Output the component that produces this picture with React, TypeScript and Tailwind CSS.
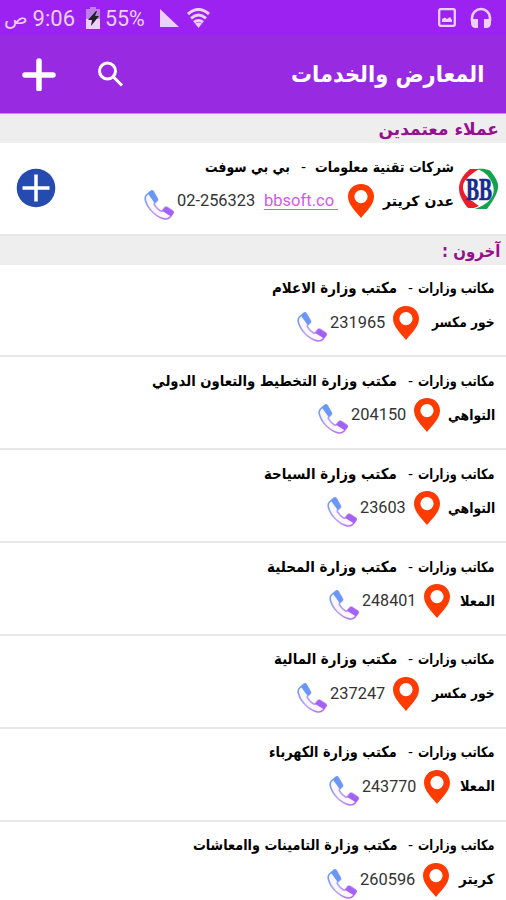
import { useLayoutEffect, useRef, useState } from "react";

type FitProps = { text: string; width: number; className?: string; ltr?: boolean };

// One line of text squeezed or stretched to a given column width.
function Fit({ text, width, className = "", ltr = false }: FitProps) {
  const ref = useRef<HTMLSpanElement>(null);
  const [scale, setScale] = useState(1);
  useLayoutEffect(() => {
    const natural = ref.current?.offsetWidth ?? width;
    if (natural > 0) setScale(width / natural);
  }, [text, width]);
  return (
    <span dir="rtl" className={"flex shrink-0 justify-start " + className} style={{ width }}>
      <span
        ref={ref}
        dir={ltr ? "ltr" : "rtl"}
        className="shrink-0 origin-right whitespace-pre"
        style={{ transform: `scaleX(${scale})` }}
      >
        {text}
      </span>
    </span>
  );
}

const arabic = "font-['DejaVu_Sans',sans-serif] font-bold";

function Pin() {
  return (
    <svg className="h-[34px] w-[26px] shrink-0" viewBox="0 0 26 34">
      <path
        fill="#ff3b00"
        fillRule="evenodd"
        d="M13 0C5.6 0 0 5.500 0 12.600 0 20.500 7.200 27 13 34c5.800-7 13-13.500 13-21.400C26 5.500 20.400 0 13 0Zm0 6a6.600 6.600 0 1 1 0 13.200A6.600 6.600 0 0 1 13 6Z"
      />
    </svg>
  );
}

function Phone() {
  return (
    <svg className="h-[30px] w-[30px] shrink-0" viewBox="0 0 30 30">
      <defs>
        <linearGradient id="call" x1="0" y1="0" x2="1" y2="1">
          <stop offset="0" stopColor="#5b9bf8" />
          <stop offset=".5" stopColor="#b9a2f6" />
          <stop offset="1" stopColor="#b263f6" />
        </linearGradient>
      </defs>
      <path
        d="M6.800 1.300 2.500 5C1.200 6.300.900 8.200 1.400 10.300 3.600 19 12.500 27.300 20.300 28.900c2.300.4 4.200-.1 5.600-1.600l3-4c.6-.9.4-1.700-.5-2.300l-5.200-3.500c-.9-.6-1.700-.5-2.400.3l-2.300 2.700c-.6.700-1.400.8-2.200.3-2.300-1.500-4.300-3.500-5.700-5.800-.5-.8-.4-1.600.3-2.200l2-1.800c.8-.7.900-1.500.4-2.400L9.300 1.700c-.6-1-1.500-1.200-2.500-.4Z"
        fill="#fcf6ff"
        stroke="url(#call)"
        strokeWidth="1.600"
      />
      <path d="M4 3.700 6.800 1.300c1-.8 1.900-.6 2.500.4l4 6.900c.5.900.4 1.700-.4 2.400l-2.300 2Z" fill="#6797f7" />
      <path d="m18.200 20.900 2.600-3.100c.7-.8 1.500-.9 2.400-.3l5.200 3.500c.9.600 1.100 1.400.5 2.300l-2.200 3Z" fill="#a361f5" />
    </svg>
  );
}

function Logo() {
  return (
    <svg direction="ltr" className="h-[42px] w-[40px] shrink-0 overflow-visible" viewBox="0 0 40 42">
      <path d="M20 1h-9C5 6 0 13 0 20c0 7 3 12 8 19h10l-3-4C8 30 4 25 4 19 4 13 9 8 20 1Z" fill="#e91f2d" />
      <path d="M18 1c5-.500 9 0 13 1.500 5 6 9 12 8 17.500-1 7-6 14-11 21H16c8-3 14-7 17-12 3-6 2-12-2-18-3-5-7-8-13-10Z" fill="#12a34c" />
      <path d="m4 32 9 1 7 5-5 2H9Z" fill="#e91f2d" />
      <text
        x="7"
        y="31.500"
        textAnchor="start"
        textLength="26"
        lengthAdjust="spacingAndGlyphs"
        className="font-['Liberation_Serif',serif] text-[31px] font-bold"
        fill="#172c8f"
        stroke="#172c8f"
        strokeWidth=".7"
      >
        BB
      </text>
    </svg>
  );
}

type Office = {
  name: string;
  nameWidth: number;
  area: string;
  areaWidth: number;
  areaBox: string;
  phone: string;
  phoneWidth: number;
};

const offices: Office[] = [
  { name: "مكتب وزارة الاعلام", nameWidth: 125, area: "خور مكسر", areaWidth: 63, areaBox: "w-[76px]", phone: "231965", phoneWidth: 55 },
  { name: "مكتب وزارة التخطيط والتعاون الدولي", nameWidth: 245, area: "التواهي", areaWidth: 47, areaBox: "w-[55px]", phone: "204150", phoneWidth: 55 },
  { name: "مكتب وزارة السياحة", nameWidth: 133, area: "التواهي", areaWidth: 47, areaBox: "w-[55px]", phone: "23603", phoneWidth: 46 },
  { name: "مكتب وزارة المحلية", nameWidth: 130, area: "المعلا", areaWidth: 35, areaBox: "w-[45px]", phone: "248401", phoneWidth: 54 },
  { name: "مكتب وزارة المالية", nameWidth: 123, area: "خور مكسر", areaWidth: 63, areaBox: "w-[76px]", phone: "237247", phoneWidth: 55 },
  { name: "مكتب وزارة الكهرباء", nameWidth: 128, area: "المعلا", areaWidth: 35, areaBox: "w-[45px]", phone: "243770", phoneWidth: 54 },
  { name: "مكتب وزارة التامينات واامعاشات", nameWidth: 205, area: "كريتر", areaWidth: 36, areaBox: "w-[46px]", phone: "260596", phoneWidth: 55 },
];

function OfficeRow({ office }: { office: Office }) {
  return (
    <div className="flex h-[92.85px] shrink-0 flex-col border-b-2 border-[#e7e7e7] pr-[11px] pt-[11.5px] text-black">
      <div className={"flex h-[24px] items-center text-[14px] leading-[24px] " + arabic}>
        <Fit text="مكاتب وزارات" width={77} />
        <span className="w-[21px] pr-[5px] font-normal">-</span>
        <Fit text={office.name} width={office.nameWidth} className="text-[15px]" />
      </div>
      <div className="mt-[5.5px] flex h-[36px] items-start">
        <div className={"flex h-[34px] shrink-0 items-center text-[14px] " + arabic + " " + office.areaBox}>
          <Fit text={office.area} width={office.areaWidth} />
        </div>
        <Pin />
        <Fit text={office.phone} width={office.phoneWidth} ltr className="mr-[8px] mt-[3px] font-['Roboto',sans-serif] text-[17px] leading-[26px] text-[#333]" />
        <div className="mr-[3px] mt-[6px] shrink-0">
          <Phone />
        </div>
      </div>
    </div>
  );
}

export default function App() {
  return (
    <div dir="rtl" className="flex h-[900px] w-[506px] flex-col overflow-hidden bg-white">
      <div dir="ltr" className="flex h-[35px] shrink-0 items-center bg-[#9b22f0] font-['Roboto',sans-serif] text-[22px] text-[#ecd0ff]">
        <Fit text="ص" width={24} className="ml-[4px] font-['DejaVu_Sans',sans-serif] text-[18px]" />
        <Fit text="9:06" width={42} ltr className="ml-[5px] mt-[2px]" />
        <svg className="ml-[10px] h-[22px] w-[16px]" viewBox="0 0 16 22">
          <path d="M5 0h6v2h4v20H1V2h4Z" fill="#ecd0ff" />
          <path d="M5 0h6v2h4v10H1V2h4Z" fill="#bd80e9" />
          <path d="m11 4-8 9h4l-1 6 8-10h-4l2-5Z" fill="#202029" />
        </svg>
        <Fit text="55%" width={40} ltr className="ml-[4px] mt-[2px]" />
        <svg className="ml-[15px] h-[18px] w-[19px]" viewBox="0 0 19 18">
          <path d="M0 0v18h19Z" fill="#ecd0ff" />
        </svg>
        <svg className="ml-[8px] h-[20px] w-[23px]" viewBox="0 0 23 20" fill="none" stroke="#ecd0ff" strokeWidth="3">
          <path d="M1 6q10.500-9 21 0M4 10.300q7.500-6.500 15 0M7 14.300q4.500-3.500 9 0" />
          <path d="M11.500 20 8 15.500q3.500-2 7 0Z" fill="#ecd0ff" stroke="none" />
        </svg>
        <svg className="ml-auto h-[19px] w-[18px]" viewBox="0 0 18 19" fill="none" stroke="#ecd0ff" strokeWidth="2.300">
          <rect x="1.200" y="1.200" width="15.600" height="16.600" rx="1.500" />
          <path d="M4 14v-3l3-1.500 2 1.500 3-2 2 3v2Z" fill="#ecd0ff" stroke="none" />
        </svg>
        <svg className="ml-[14px] mr-[14px] h-[22px] w-[22px]" viewBox="0 0 22 22">
          <path d="M2 14v-3a9 9 0 0 1 18 0v3" fill="none" stroke="#ecd0ff" strokeWidth="2.600" />
          <path d="M1 12h7v9H4.500Q1 20 1 16ZM14 12h7v4q0 4-3.500 5H14Z" fill="#ecd0ff" />
        </svg>
      </div>

      <header className="flex h-[79px] shrink-0 items-center border-b border-[#c58cf0] bg-[#982be1] pr-[22px] text-white">
        <Fit text="المعارض والخدمات" width={193} className={"text-[23px] leading-[40px] " + arabic} />
        <svg className="ml-[41px] mr-auto h-[27px] w-[27px]" viewBox="0 0 27 27" fill="none" stroke="white" strokeWidth="3">
          <circle cx="10.500" cy="10" r="8" />
          <path d="m16 15.500 9 9" />
        </svg>
        <svg className="ml-[22px] h-[34px] w-[34px]" viewBox="0 0 34 34" stroke="white" strokeWidth="5.500" strokeLinecap="round">
          <path d="M17 4v28M3 18h28" />
        </svg>
      </header>

      <div className={"flex h-[29px] shrink-0 items-center border-t-2 border-[#f2e8fa] bg-[#eee] pr-[7px] text-[17px] text-[#960f8f] " + arabic}>
        <Fit text="عملاء معتمدين" width={121} />
      </div>

      <div className="flex h-[93px] shrink-0 border-b-2 border-[#e7e7e7] pr-[7px] text-black">
        <div className="mt-[25px]"><Logo /></div>
        <div className="mr-[5px] flex flex-col pt-[12px]">
          <div className={"flex h-[24px] items-center text-[14px] " + arabic}>
            <Fit text="شركات تقنية معلومات" width={139} />
            <span className="w-[25px] pr-[9px] font-normal">-</span>
            <Fit text="بي بي سوفت" width={85} className="text-[15px]" />
          </div>
          <div className="mt-[5px] flex h-[36px] items-start">
            <div className={"flex h-[34px] w-[80px] items-center text-[14px] " + arabic}>
              <Fit text="عدن كريتر" width={71} />
            </div>
            <Pin />
            <div className="mr-[10px] mt-[3px] flex h-[23px] w-[74px] shrink-0 border-b border-[#d35be8] pr-[4px] font-['Roboto',sans-serif] text-[17px] leading-[26px] text-[#d35be8]">
              <Fit text="bbsoft.co" width={70} ltr />
            </div>
            <Fit text="02-256323" width={78} ltr className="mr-[9px] mt-[3px] font-['Roboto',sans-serif] text-[17px] leading-[26px] text-[#333]" />
            <div className="mr-[3px] mt-[6px] shrink-0">
              <Phone />
            </div>
          </div>
        </div>
        <svg className="ml-[16px] mr-auto mt-[25px] h-[40px] w-[40px] shrink-0" viewBox="0 0 40 40">
          <circle cx="20" cy="20" r="19.300" fill="#264bb0" />
          <path d="M20 6.500v27M6.500 20h27" stroke="white" strokeWidth="3.500" />
        </svg>
      </div>

      <div className={"flex h-[28.500px] shrink-0 items-center bg-[#eee] pr-[6px] pt-[2px] text-[17px] text-[#960f8f] " + arabic}>
        <Fit text="آخرون :" width={58} />
      </div>

      <main className="flex flex-col">
        {offices.map((office) => (
          <OfficeRow key={office.phone} office={office} />
        ))}
      </main>
    </div>
  );
}
